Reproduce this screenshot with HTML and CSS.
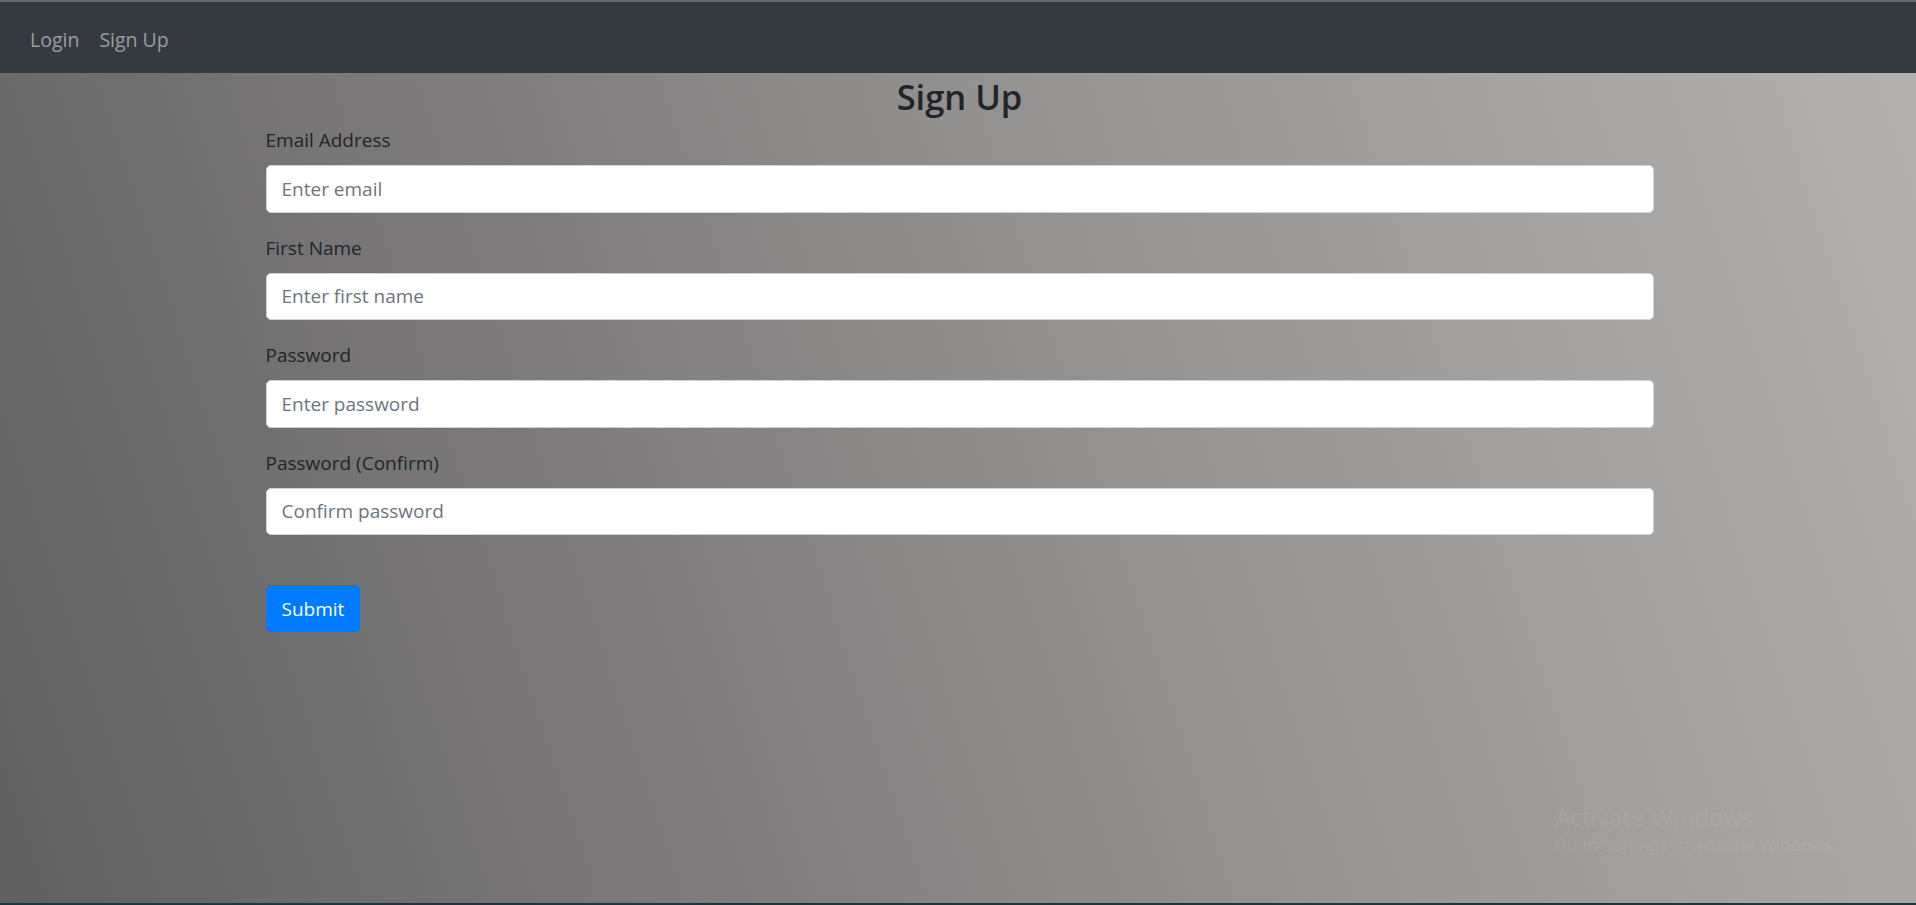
FILE: index.html
```html
<!DOCTYPE html>
<html lang="en">
<head>
<meta charset="utf-8">
<title>Sign Up</title>
<link rel="stylesheet" href="styles.css">
</head>
<body>
<div class="frame-top"></div>
<nav class="navbar">
  <a class="nav-link" href="#">Login</a>
  <a class="nav-link" href="#">Sign Up</a>
</nav>
<main class="page">
  <div class="container">
    <form class="signup-form">
      <h2 class="title">Sign Up</h2>
      <div class="form-group">
        <label class="label" for="email">Email Address</label>
        <input class="form-control" type="email" id="email" placeholder="Enter email">
      </div>
      <div class="form-group">
        <label class="label" for="firstName">First Name</label>
        <input class="form-control" type="text" id="firstName" placeholder="Enter first name">
      </div>
      <div class="form-group">
        <label class="label" for="password1">Password</label>
        <input class="form-control" type="password" id="password1" placeholder="Enter password">
      </div>
      <div class="form-group">
        <label class="label" for="password2">Password (Confirm)</label>
        <input class="form-control" type="password" id="password2" placeholder="Confirm password">
      </div>
      <div class="actions">
        <button type="button" class="btn-primary">Submit</button>
      </div>
    </form>
  </div>
  <div class="watermark">
    <div class="wm-title">Activate Windows</div>
    <div class="wm-sub">Go to Settings to activate Windows.</div>
  </div>
</main>
<div class="frame-bottom"></div>
</body>
</html>
```
FILE: styles.css
```css
* { box-sizing: border-box; }
html, body { height: 100%; }
body {
  margin: 0;
  font-family: "Open Sans", "Noto Sans", "Liberation Sans", sans-serif;
  font-size: 20px;
  line-height: 1.5;
  color: #212529;
  display: flex;
  flex-direction: column;
  overflow: hidden;
}
.frame-top {
  height: 2px;
  background: #5e6a72;
  flex: none;
}
.navbar {
  flex: none;
  height: 71px;
  background: #343a40;
  display: flex;
  align-items: center;
  padding: 4px 20px 0;
}
.nav-link {
  color: rgba(255, 255, 255, 0.5);
  text-decoration: none;
  padding: 0 10px;
  font-size: 19.5px;
}
.page {
  flex: 1;
  position: relative;
  padding-left: 3px;
  background: linear-gradient(72deg, #606060 0%, #7b7979 30%, #959493 60%, #b2b1af 100%);
}
.container {
  width: 1388px;
  margin: 0 auto;
}
.title {
  margin: 0 0 4px;
  font-size: 34.5px;
  font-weight: 600;
  line-height: 48px;
  text-align: center;
  color: #212529;
}
.form-group {
  margin-bottom: 20px;
}
.label {
  display: block;
  font-size: 19px;
  line-height: 30px;
  margin-bottom: 10px;
}
.form-control {
  display: block;
  width: 100%;
  height: 47.5px;
  padding: 0 15px;
  font-family: inherit;
  font-size: 19px;
  color: #495057;
  background: #fff;
  border: 1px solid #ced4da;
  border-radius: 5px;
  outline: none;
}
.form-control::placeholder {
  color: #6c757d;
  opacity: 1;
}
.actions {
  padding-top: 30px;
}
.btn-primary {
  height: 47px;
  padding: 0 15px;
  font-family: inherit;
  font-size: 19px;
  color: #fff;
  background: #007bff;
  border: 1px solid #007bff;
  border-radius: 5px;
}
.watermark {
  position: absolute;
  left: 1555px;
  top: 728px;
  color: rgba(255, 255, 255, 0.07);
  font-family: "Noto Sans", "Open Sans", sans-serif;
}
.wm-title {
  font-size: 24px;
  line-height: 32px;
}
.wm-sub {
  font-size: 17px;
  line-height: 24px;
}
.frame-bottom {
  flex: none;
  height: 2px;
  background: #1d3547;
}
```
